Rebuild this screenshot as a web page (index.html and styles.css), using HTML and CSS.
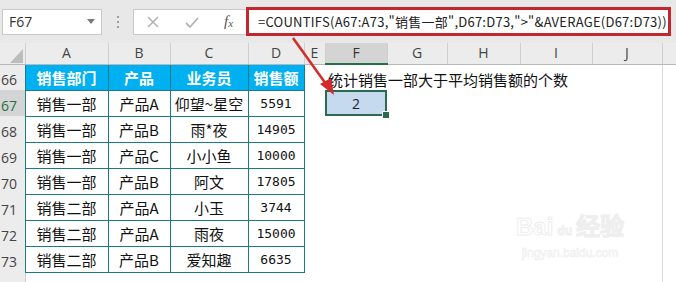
FILE: index.html
```html
<!DOCTYPE html>
<html lang="zh-CN">
<head>
    <meta charset="UTF-8">
    <meta name="viewport" content="width=device-width, initial-scale=1.0">
    <title>COUNTIFS - 销售一部</title>
    <link rel="stylesheet" href="styles.css">
</head>
<body>
    <!-- Name box + formula bar -->
    <header class="toolbar">
        <div class="name-box">
            <span>F67</span>
            <svg class="caret" width="8" height="5" viewBox="0 0 8 5"><path d="M0 0H8L4 5Z" fill="#7a7a7a"/></svg>
        </div>
        <div class="grip">
            <i></i><i></i><i></i>
        </div>
        <div class="fx-buttons">
            <svg width="14" height="14" viewBox="0 0 14 14"><path d="M2 2L12 12M12 2L2 12" stroke="#b4b4b4" stroke-width="1.6"/></svg>
            <svg width="16" height="14" viewBox="0 0 16 14"><path d="M2 8L6 12L14 3" stroke="#b4b4b4" stroke-width="1.8" fill="none"/></svg>
            <span class="fx">f<sub>x</sub></span>
        </div>
        <div class="formula">=COUNTIFS(A67:A73,"销售一部",D67:D73,"&gt;"&amp;AVERAGE(D67:D73))</div>
    </header>

    <!-- Worksheet -->
    <table class="sheet">
        <colgroup>
            <col style="width: 25px"><col style="width: 83px"><col style="width: 62px"><col style="width: 78px">
            <col style="width: 56px"><col style="width: 21px"><col style="width: 62px"><col style="width: 60px">
            <col style="width: 73px"><col style="width: 72px"><col style="width: 70px"><col style="width: 14px">
        </colgroup>
        <tr class="col-heads">
            <th class="corner"><svg width="13" height="14" viewBox="0 0 13 14"><path d="M13 0V14H0Z" fill="#bdbdbd"/></svg></th>
            <th>A</th><th>B</th><th>C</th><th>D</th><th>E</th>
            <th class="active">F</th><th>G</th><th>H</th><th>I</th><th>J</th><th></th>
        </tr>
        <tr>
            <th class="row-head">66</th>
            <td class="cell head">销售部门</td><td class="cell head">产品</td><td class="cell head">业务员</td><td class="cell head">销售额</td>
            <td></td><td class="note">统计销售一部大于平均销售额的个数</td><td></td><td></td><td></td><td></td><td class="edge"></td>
        </tr>
        <tr>
            <th class="row-head active">67</th>
            <td class="cell">销售一部</td><td class="cell">产品A</td><td class="cell">仰望~星空</td><td class="cell num">5591</td>
            <td></td><td class="selected">2</td><td></td><td></td><td></td><td></td><td class="edge"></td>
        </tr>
        <tr>
            <th class="row-head">68</th>
            <td class="cell">销售一部</td><td class="cell">产品B</td><td class="cell">雨*夜</td><td class="cell num">14905</td>
            <td></td><td></td><td></td><td></td><td></td><td></td><td class="edge"></td>
        </tr>
        <tr>
            <th class="row-head">69</th>
            <td class="cell">销售一部</td><td class="cell">产品C</td><td class="cell">小小鱼</td><td class="cell num">10000</td>
            <td></td><td></td><td></td><td></td><td></td><td></td><td class="edge"></td>
        </tr>
        <tr>
            <th class="row-head">70</th>
            <td class="cell">销售一部</td><td class="cell">产品B</td><td class="cell">阿文</td><td class="cell num">17805</td>
            <td></td><td></td><td></td><td></td><td></td><td></td><td class="edge"></td>
        </tr>
        <tr>
            <th class="row-head">71</th>
            <td class="cell">销售二部</td><td class="cell">产品A</td><td class="cell">小玉</td><td class="cell num">3744</td>
            <td></td><td></td><td></td><td></td><td></td><td></td><td class="edge"></td>
        </tr>
        <tr>
            <th class="row-head">72</th>
            <td class="cell">销售二部</td><td class="cell">产品A</td><td class="cell">雨夜</td><td class="cell num">15000</td>
            <td></td><td></td><td></td><td></td><td></td><td></td><td class="edge"></td>
        </tr>
        <tr>
            <th class="row-head">73</th>
            <td class="cell">销售二部</td><td class="cell">产品B</td><td class="cell">爱知趣</td><td class="cell num">6635</td>
            <td></td><td></td><td></td><td></td><td></td><td></td><td class="edge"></td>
        </tr>
        <tr class="tail">
            <th class="row-head"></th>
            <td></td><td></td><td></td><td></td><td></td><td></td><td></td><td></td><td></td><td></td><td class="edge"></td>
        </tr>
    </table>

    <!-- Red annotation arrow -->
    <svg class="arrow" width="676" height="282" viewBox="0 0 676 282">
        <line x1="293" y1="38" x2="326" y2="84" stroke="#d42a2a" stroke-width="2.5"/>
        <path d="M334 95L320 84L331 78Z" fill="#d42a2a"/>
    </svg>

    <!-- Watermark -->
    <div class="watermark">
        <div class="wm-top">Bai<span class="paw">du</span>经验</div>
        <div class="wm-url">jingyan.baidu.com</div>
    </div>
</body>
</html>
```

FILE: styles.css
```css
/* Base */
* {
    margin: 0;
    padding: 0;
    box-sizing: border-box;
}

body {
    width: 676px;
    height: 282px;
    overflow: hidden;
    position: relative;
    background: #fff;
    color: #222;
    font-family: "Noto Sans CJK SC", "Noto Sans", sans-serif;
}

/* Toolbar */
.toolbar {
    height: 43px;
    background: #e8e8e8;
    display: flex;
    align-items: center;
    padding-left: 2px;
}

.name-box {
    width: 100px;
    height: 26px;
    background: #fff;
    border: 1px solid #c9c9c9;
    display: flex;
    align-items: center;
    justify-content: space-between;
    padding: 0 6px 0 6px;
    font-family: "Open Sans", "Noto Sans", sans-serif;
    font-size: 14px;
    color: #333;
}

.grip {
    width: 31px;
    display: flex;
    flex-direction: column;
    align-items: center;
    gap: 3px;
}

.grip i {
    width: 2px;
    height: 2px;
    background: #a0a0a0;
}

.fx-buttons {
    width: 113px;
    height: 26px;
    background: #fff;
    border: 1px solid #c9c9c9;
    border-right: none;
    display: flex;
    align-items: center;
    padding-left: 12px;
    gap: 24px;
}

.fx {
    font-family: "Liberation Serif", serif;
    font-style: italic;
    font-size: 15px;
    color: #555;
}

.fx sub {
    font-size: 11px;
    vertical-align: -1px;
}

.formula {
    width: 425px;
    height: 29px;
    background: #fff;
    border: 3px solid #c3262c;
    padding-left: 9px;
    font-size: 13px;
    line-height: 23px;
    letter-spacing: 0.25px;
    color: #222;
    white-space: nowrap;
}

/* Worksheet */
.sheet {
    table-layout: fixed;
    width: 676px;
    border-collapse: collapse;
}

tr {
    height: 26px;
}

.col-heads {
    height: 21px;
}

.col-heads th {
    height: 21px;
    background: #ececec;
    border-right: 1px solid #cfcfcf;
    border-bottom: 1px solid #b8b8b8;
    font-family: "Open Sans", "Noto Sans", sans-serif;
    font-weight: normal;
    font-size: 14px;
    color: #444;
    line-height: 1;
}

.col-heads th.active {
    background: #d4d4d4;
    border-bottom: 2px solid #217346;
    color: #333;
}

.corner {
    text-align: right;
    vertical-align: bottom;
}

.corner svg {
    display: block;
    margin: 0 2px 1px auto;
}

.row-head {
    background: #ececec;
    font-family: "Open Sans", "Noto Sans", sans-serif;
    font-weight: normal;
    font-size: 14px;
    color: #444;
    text-align: left;
    padding: 4px 0 0 1px;
}

.row-head.active {
    background: #d4d4d4;
    color: #217346;
}

.tail {
    height: 10px;
}

.tail .row-head {
    border-right: 1px solid #cfcfcf;
}

.cell {
    border: 1px solid #1c7a83;
    text-align: center;
    font-size: 15px;
    color: #111;
    padding-top: 1px;
}

.cell.head {
    background: #00b0f0;
    color: #fff;
    font-weight: bold;
}

.cell.num {
    font-family: "DejaVu Sans Mono", monospace;
    font-size: 13px;
}

.note {
    white-space: nowrap;
    overflow: visible;
    font-size: 15px;
    padding: 3px 0 0 3px;
    color: #111;
}

.selected {
    position: relative;
    background: #c5d9ef;
    box-shadow: inset 0 0 0 2px #2b6a4c;
    text-align: center;
    font-family: "Open Sans", "Noto Sans", sans-serif;
    font-size: 14px;
    color: #222;
}

.selected::after {
    content: "";
    position: absolute;
    right: -3px;
    bottom: -3px;
    width: 6px;
    height: 6px;
    background: #2b6a4c;
    border: 1px solid #fff;
}

.edge {
    border-left: 1px solid #d8d8d8;
}

/* Overlays */
.arrow {
    position: absolute;
    left: 0;
    top: 0;
    pointer-events: none;
}

.watermark {
    position: absolute;
    left: 516px;
    top: 212px;
    color: #fff;
    -webkit-text-stroke: 1px #eeeeee;
    text-align: center;
}

.wm-top {
    font-family: "Liberation Sans", sans-serif;
    font-size: 24px;
    font-weight: bold;
    line-height: 30px;
}

.paw {
    font-size: 12px;
    margin: 0 4px;
}

.wm-url {
    font-family: "Liberation Sans", sans-serif;
    font-size: 12px;
    -webkit-text-stroke: 0.6px #eeeeee;
}
```
